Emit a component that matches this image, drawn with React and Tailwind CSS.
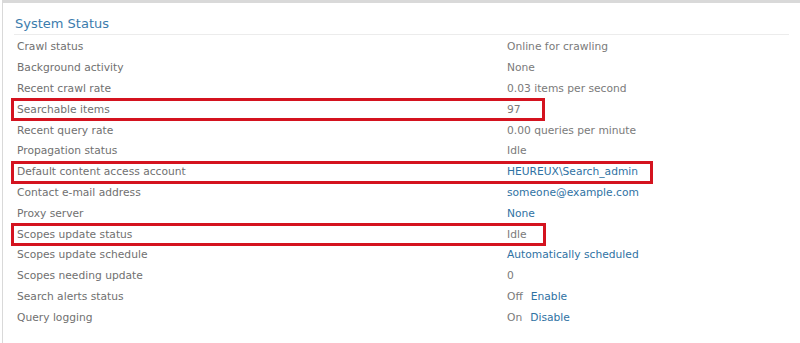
import React from "react";

const rows = [
  { label: "Crawl status", value: "Online for crawling" },
  { label: "Background activity", value: "None" },
  { label: "Recent crawl rate", value: "0.03 items per second" },
  { label: "Searchable items", value: "97", box: 534 },
  { label: "Recent query rate", value: "0.00 queries per minute" },
  { label: "Propagation status", value: "Idle" },
  { label: "Default content access account", value: "HEUREUX\\Search_admin", link: true, box: 642 },
  { label: "Contact e-mail address", value: "someone@example.com", link: true },
  { label: "Proxy server", value: "None", link: true },
  { label: "Scopes update status", value: "Idle", box: 535 },
  { label: "Scopes update schedule", value: "Automatically scheduled", link: true },
  { label: "Scopes needing update", value: "0" },
  { label: "Search alerts status", value: "Off", action: "Enable" },
  { label: "Query logging", value: "On", action: "Disable" },
];

function StatusRow({ row }) {
  return (
    <div className="relative flex items-center h-[20.8px]">
      <div className="w-[493px] pl-[3px] text-[#707070]">{row.label}</div>
      <div className={row.link ? "text-[#2f72a3]" : "text-[#7a7a7a]"}>
        {row.value}
        {row.action && <span className="ml-[8px] text-[#2f72a3]">{row.action}</span>}
      </div>
      {/* red annotation box */}
      {row.box && (
        <div
          className="absolute top-[-1px] bottom-[-1px] left-[-3px] border-[3px] border-[#d4131f]"
          style={{ width: row.box }}
        />
      )}
    </div>
  );
}

export default function App() {
  return (
    <div
      className="w-[800px] h-[343px] bg-white overflow-hidden"
      style={{ fontFamily: "Verdana, 'DejaVu Sans', sans-serif" }}
    >
      <div className="ml-[2px] h-full border-t-[3px] border-l border-[#d9d9d9] text-[10.7px]">
        <div className="mx-[11px] h-[32px] flex items-end pb-[1px] border-b border-[#ececec]">
          <span className="pl-[1px] text-[13px] text-[#3b7cad]">System Status</span>
        </div>
        <div className="ml-[11px] mt-[2px]">
          {rows.map((r) => (
            <StatusRow key={r.label} row={r} />
          ))}
        </div>
      </div>
    </div>
  );
}
